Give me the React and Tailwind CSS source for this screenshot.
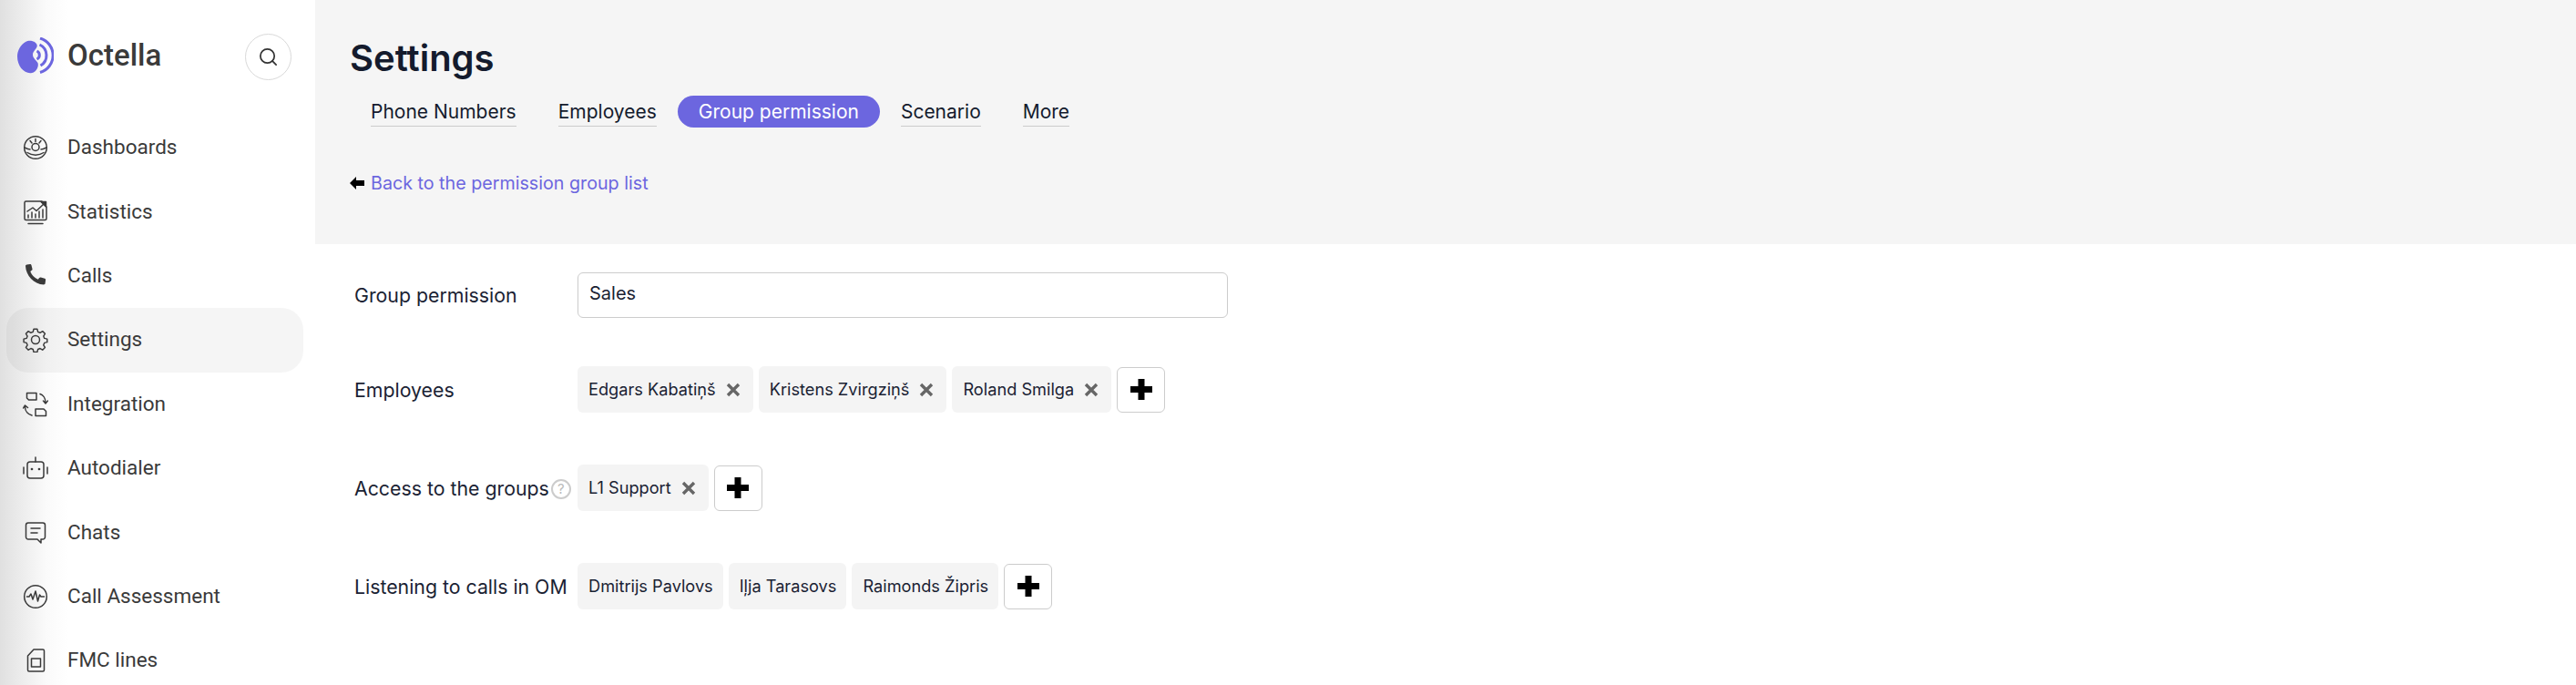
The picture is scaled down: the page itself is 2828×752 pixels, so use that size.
import React from "react";
import { Search } from "lucide-react";

const I = ({ children, fill = "none" }) => (
  <svg width="28" height="28" viewBox="0 0 28 28" fill={fill} stroke={fill === "none" ? "#3a3a3a" : "none"} strokeWidth="1.5" strokeLinecap="round" strokeLinejoin="round">{children}</svg>
);

const icons = {
  dash: <I><circle cx="14" cy="14" r="12.3" /><circle cx="14" cy="13.5" r="4" /><path d="M2 14c2 1 4 2 6 2M26 14c-2 1-4 2-6 2M5 19.5c5 3.5 13 3.5 18 0M14 4.5v3M8 6.5l2 2.5M20 6.5l-2 2.5" /></I>,
  stats: <I><path d="M21 2H3.5A1.5 1.5 0 0 0 2 3.500V21a1.500 1.500 0 0 0 1.500 1.500h21A1.500 1.500 0 0 0 26 21V8M6 26.500h16" /><path d="M5 13l6-4 4 3.500L24 4" /><path d="M20 2.500h5.500V8z" fill="#3a3a3a" /><path d="M6 20v-3M10 20v-6M14 20v-4M18 20v-7M22 20v-9" /></I>,
  phone: <I fill="#3a3a3a"><path d="M4.500 1.500 8 1c.8 0 1.300.5 1.500 1.200l1 4c.2.700-.1 1.200-.7 1.600L8.300 9c1.300 3.600 4.800 7.200 8.500 8.700l1.300-1.600c.5-.6 1-.8 1.700-.6l4.300 1.300c.7.200 1.100.8 1 1.500l-.5 4c-.1.700-.8 1.200-1.600 1.200C12 23 3.500 13.600 3 3c0-.8.700-1.400 1.500-1.500z" /></I>,
  gear: <I><path d="M12 1.800h4l.8 3.200 2.500 1 2.800-1.700 2.800 2.800-1.700 2.800 1 2.500 3.200.8v3.600l-3.200.8-1 2.500 1.700 2.800-2.800 2.800-2.800-1.700-2.500 1-.8 3.200h-4l-.8-3.200-2.500-1-2.800 1.700-2.800-2.800 1.700-2.800-1-2.500-3.200-.8v-3.600l3.200-.8 1-2.500-1.700-2.800 2.800-2.800 2.800 1.700 2.500-1z" transform="translate(.5 .5) scale(.96)" /><circle cx="14" cy="14" r="4.500" /></I>,
  integ: <I><path d="M4.500 1.500h10.500v7.500H6.500L4.500 7z" /><path d="M14 19h9l2.500 2.500V26.500H14z" /><path d="M19 2.500c3 1 6 4.500 6 9.500M22.500 10l2.500 3 2.500-3M10 26c-4-1-7.500-4.500-7.500-9.500M.5 18l2-3 3 2.500" /></I>,
  bot: <I><rect x="5" y="7" width="18" height="18" rx="3" /><path d="M14 7V2M1 13v7M27 13v7" /><circle cx="10" cy="15" r=".6" /><circle cx="18" cy="15" r=".6" /></I>,
  chat: <I><path d="M6 3h16a2.500 2.500 0 0 1 2.500 2.500v13A2.500 2.500 0 0 1 22 21h-2v4l-4-4H6a2.500 2.500 0 0 1-2.500-2.500v-13A2.500 2.500 0 0 1 6 3z" /><path d="M9 9h10M9 14h7" /></I>,
  wave: <I><circle cx="14" cy="14" r="12.300" /><path d="M4.500 14h2.500l2-3 2 6 3-9 2.500 11 2-7 1.500 2h3.500" /></I>,
  sim: <I><path d="M12 2h10a1.500 1.500 0 0 1 1.500 1.500v21a1.500 1.500 0 0 1-1.500 1.500H7a1.500 1.500 0 0 1-1.500-1.500V9z" /><rect x="9.500" y="12" width="10" height="9" /></I>,
};

const nav = [
  ["Dashboards", icons.dash],
  ["Statistics", icons.stats],
  ["Calls", icons.phone],
  ["Settings", icons.gear, true],
  ["Integration", icons.integ],
  ["Autodialer", icons.bot],
  ["Chats", icons.chat],
  ["Call Assessment", icons.wave],
  ["FMC lines", icons.sim],
];

const Logo = () => (
  <svg width="40" height="40" viewBox="0 0 40 40" fill="none">
    <path d="M9 5C13 2.500 20 4 21.500 8C23 12 17 14.500 17 19C17 23 21 25 22.500 28C24 33 20 38.500 16 39C8 40.500 0 32 0 21C0 14 4 8 9 5Z" fill="#6c66df" />
    <path d="M21.500 15a5 5 0 0 1 0 9" stroke="#6c66df" strokeWidth="3" />
    <path d="M24.500 8a13 13 0 0 1 1 23" stroke="#6c66df" strokeWidth="3" />
    <path d="M25 1a19.500 19.500 0 0 1 0 37.500" stroke="#6c66df" strokeWidth="3" />
  </svg>
);

const X = () => (
  <svg className="ml-[11px] shrink-0" width="16" height="16" viewBox="0 0 16 16">
    <path d="M2 2l12 12M14 2L2 14" stroke="#666" strokeWidth="3.400" />
  </svg>
);

const Chip = ({ name, x = true }) => (
  <div className={"h-[51px] rounded-md bg-[#f4f4f4] flex items-center pl-[12px] text-[18.2px] text-[#1a2233] " + (x ? "pr-[14px]" : "pr-[11px]")}>
    <span>{name}</span>
    {x && <X />}
  </div>
);

const Add = () => (
  <button className="h-[50px] w-[53px] rounded-md border border-[#ccc] bg-white flex items-center justify-center">
    <svg width="24" height="23" viewBox="0 0 24 23"><path d="M8.500 0h7v8H24v7h-8.500v8h-7v-8H0V8h8.500z" fill="#000" /></svg>
  </button>
);

const Row = ({ label, help, children, className }) => (
  <div className={"flex items-center gap-[6px] " + className}>
    <div className="w-[239px] shrink-0 pt-[2px] flex items-center text-[21.3px] text-[#1a2233]">
      <span className="whitespace-nowrap">{label}</span>
      {help && (
        <span className="ml-[2px] w-[22px] h-[22px] shrink-0 rounded-full border-2 border-[#ccc] text-[#bbb] text-[15px] leading-none flex items-center justify-center">?</span>
      )}
    </div>
    {children}
  </div>
);

const tabs = ["Phone Numbers", "Employees", "Group permission", "Scenario", "More"];

export default function App() {
  return (
    <div className="flex h-[752px] w-[2828px] overflow-hidden bg-white">
      <aside className="w-[346px] shrink-0 bg-[linear-gradient(90deg,#e0e0e0,#fafafa_50px,#ffffff_75px)] font-['Roboto',sans-serif]">
        <div className="h-[127px] pl-[19px] pr-[26px] pt-[37px] flex items-start justify-between">
          <div className="flex items-center h-[48px]">
            <Logo />
            <span className="ml-[15px] text-[33px] font-medium text-[#3a3a3a]">Octella</span>
          </div>
          <button className="w-[51px] h-[51px] rounded-full border border-[#d9d9d9] bg-white flex items-center justify-center">
            <Search size={23} color="#333" strokeWidth={1.8} />
          </button>
        </div>
        <nav className="pl-[7px] pr-[13px]">
          {nav.map(([label, icon, active]) => (
            <div key={label} className={"h-[70.4px] rounded-[24px] flex items-center pl-[18px] " + (active ? "bg-black/[0.04]" : "")}>
              <span className="w-[28px] flex justify-center">{icon}</span>
              <span className="ml-[21px] text-[22.5px] text-[#3a3a3a]">{label}</span>
            </div>
          ))}
        </nav>
      </aside>
      <main className="flex-1 font-['Inter',sans-serif]">
        <header className="h-[268px] bg-[#f5f5f5] pl-[38px] pt-[40px]">
          <h1 className="text-[40px] leading-[48px] font-semibold text-[#141b2d]">Settings</h1>
          <div className="mt-[17px] flex h-[35px]">
            {tabs.map((t) => {
              const on = t === "Group permission";
              return (
                <a key={t} className={"px-[23px] h-[35px] rounded-full flex items-center text-[21px] " + (on ? "bg-[#6c66df] text-white" : "text-[#141b2d]")}>
                  <span className={"leading-[31px] h-[32px] " + (on ? "" : "border-b border-[#ccc]")}>{t}</span>
                </a>
              );
            })}
          </div>
          <div className="mt-[48px] flex items-center h-[28px]">
            <svg className="mr-[7px] -mt-[3px]" width="16" height="14" viewBox="0 0 16 14"><path d="M7 0v4h9v6H7v4L0 7z" fill="#000" /></svg>
            <span className="text-[19.7px] text-[#6c66df]">Back to the permission group list</span>
          </div>
        </header>
        <section className="pl-[43px] pt-[31px]">
          <Row label="Group permission" className="h-[50px]">
            <div className="w-[714px] h-[50px] rounded-md border border-[#ccc] pl-[12px] pb-[4px] flex items-center text-[20px] text-[#1a2233]">Sales</div>
          </Row>
          <Row label="Employees" className="mt-[53px]">
            <Chip name="Edgars Kabatiņš" />
            <Chip name="Kristens Zvirgziņš" />
            <Chip name="Roland Smilga" />
            <Add />
          </Row>
          <Row label="Access to the groups" help className="mt-[57px]">
            <Chip name="L1 Support" />
            <Add />
          </Row>
          <Row label="Listening to calls in OM" className="mt-[57px]">
            <Chip name="Dmitrijs Pavlovs" x={false} />
            <Chip name="Iļja Tarasovs" x={false} />
            <Chip name="Raimonds Žipris" x={false} />
            <Add />
          </Row>
        </section>
      </main>
    </div>
  );
}
